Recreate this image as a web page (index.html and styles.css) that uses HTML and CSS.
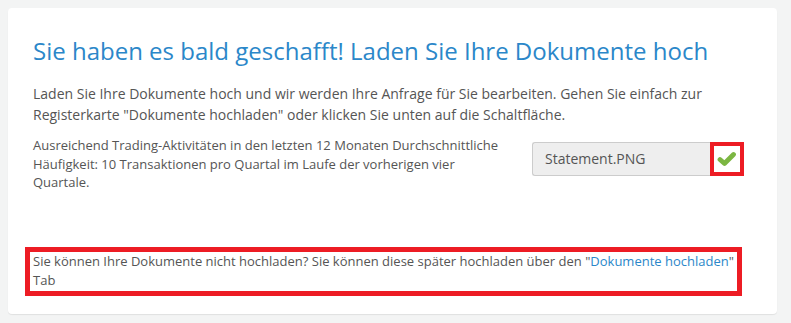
FILE: index.html
```html
<!DOCTYPE html>
<html lang="de">
<head>
<meta charset="utf-8">
<title>Dokumente hochladen</title>
<link rel="stylesheet" href="styles.css">
</head>
<body>
<div class="card">
  <h1 class="title">Sie haben es bald geschafft! Laden Sie Ihre Dokumente hoch</h1>
  <p class="intro">Laden Sie Ihre Dokumente hoch und wir werden Ihre Anfrage für Sie bearbeiten. Gehen Sie einfach zur Registerkarte "Dokumente hochladen" oder klicken Sie unten auf die Schaltfläche.</p>
  <div class="req-row">
    <p class="req-text">Ausreichend Trading-Aktivitäten in den letzten 12 Monaten Durchschnittliche Häufigkeit: 10 Transaktionen pro Quartal im Laufe der vorherigen vier Quartale.</p>
    <div class="upload">
      <div class="file-field">Statement.PNG</div>
      <div class="check-box">
        <svg class="check" width="20" height="16" viewBox="0 0 20 16"><polyline points="3,8.5 7.5,12.5 16.5,3.5" fill="none" stroke="#7cb642" stroke-width="4.8" stroke-linecap="round" stroke-linejoin="round"/></svg>
      </div>
    </div>
  </div>
  <div class="note">Sie können Ihre Dokumente nicht hochladen? Sie können diese später hochladen über den "<a class="note-link" href="#">Dokumente hochladen</a>" Tab</div>
</div>
</body>
</html>
```

FILE: styles.css
```css
html, body {
  margin: 0;
  padding: 0;
}
body {
  background: #f3f4f4;
  padding: 8px;
  font-family: "Open Sans", "Noto Sans", sans-serif;
  color: #555;
}
.card {
  box-sizing: border-box;
  width: 769px;
  height: 306px;
  background: #fff;
  border-radius: 4px;
  box-shadow: 0 1px 1px rgba(0, 0, 0, 0.08);
  padding: 27px 33px 0 25px;
}
.title {
  margin: 0;
  font-size: 24px;
  line-height: 31px;
  font-weight: 400;
  color: #2b87c9;
}
.intro {
  margin: 17px 0 0;
  font-size: 14px;
  line-height: 21px;
}
.req-row {
  display: flex;
  align-items: flex-start;
  justify-content: space-between;
  margin-top: 11px;
}
.req-text {
  margin: 0;
  width: 470px;
  font-size: 13px;
  line-height: 18.5px;
}
.upload {
  display: flex;
  margin-top: 6px;
}
.file-field {
  box-sizing: border-box;
  width: 178px;
  height: 34px;
  background: #eee;
  border: 1px solid #ccc;
  border-right: none;
  border-radius: 3px 0 0 3px;
  font-size: 14px;
  line-height: 32px;
  padding-left: 12px;
  color: #555;
}
.check-box {
  box-sizing: border-box;
  width: 34px;
  height: 34px;
  border: 4px solid #ed1c24;
  display: flex;
  align-items: center;
  justify-content: center;
}
.note {
  box-sizing: border-box;
  margin: 55px 0 0 -8px;
  width: 717px;
  border: 5px solid #ed1c24;
  padding: 0 3px;
  font-size: 13px;
  line-height: 19.5px;
}
.note-link {
  color: #2b87c9;
  text-decoration: none;
}
```
